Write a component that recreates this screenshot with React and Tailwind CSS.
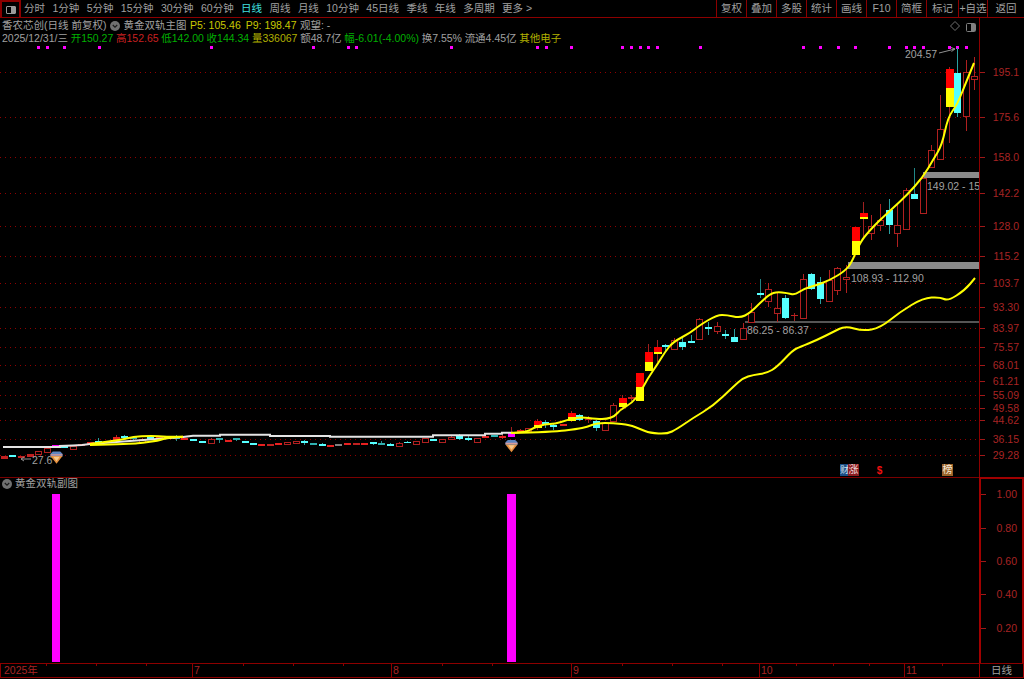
import React from "react";

const RED = "#b02020";
const leftTabs = ["分时","1分钟","5分钟","15分钟","30分钟","60分钟","日线","周线","月线","10分钟","45日线","季线","年线","多周期","更多 >"];
const rightTabs = [["复权","w-[30px]"],["叠加","w-[30px]"],["多股","w-[30px]"],["统计","w-[30px]"],["画线","w-[30px]"],["F10","w-[30px]"],["简框","w-[30px]"],["标记","w-[32px]"],["+自选","w-[29px]"],["返回","w-[37px]"]];
const prices = [["195.1",72],["175.6",117],["158.0",157],["142.2",193],["128.0",226],["115.2",256],["103.7",283],["93.30",307],["83.97",328],["75.57",347],["68.01",365],["61.21",381],["55.09",395],["49.58",408],["44.62",420],["36.15",439],["29.28",455]];
const subTicks = [["1.00",494],["0.80",528],["0.60",561],["0.40",594],["0.20",628]];
const dots = [37,46,63,98,210,312,347,355,450,536,545,570,621,630,639,647,656,699,802,819,837,854,888,905,913,922,948,956,965];
const timeTicks = [45,95,145,242,292,342,441,491,621,671,721,795,832,868,941];

// x, high, bodyTop, bodyBottom, low, kind, split
const candles = [
[4,456,456,459,459,"d"],[12,455,455,457,457,"c"],[21,456,456,458,458,"d"],[30,454,454,457,457,"d"],[38,451,451,454,454,"h"],[47,448,448,452,452,"h"],[55,445,445,447,447,"m"],[64,446,446,448,448,"c"],[73,446,446,449,449,"h"],[81,444,444,446,446,"r"],[90,442,442,444,444,"r"],[98,438,441,443,445,"c"],
[107,441,441,443,443,"c"],[116,435,437,440,440,"r"],[124,435,436,438,439,"c"],[133,437,437,439,441,"t"],[142,438,439,442,442,"h"],[150,436,437,439,439,"c"],[159,437,437,439,439,"r"],[167,436,436,438,438,"r"],[176,435,437,439,441,"t"],[184,438,438,440,440,"r"],[193,439,439,441,441,"c"],[202,441,441,443,443,"c"],[211,438,439,443,443,"h"],[219,438,438,440,443,"t"],[228,440,440,442,442,"r"],[236,438,438,440,441,"t"],[245,441,441,443,443,"c"],[253,443,443,445,445,"c"],
[261,444,444,446,446,"r"],[270,444,444,446,446,"d"],[278,443,443,445,445,"r"],[287,442,442,444,444,"h"],[296,441,441,443,443,"h"],[304,440,441,443,445,"c"],[313,443,443,445,445,"t"],[322,443,444,446,446,"c"],[330,445,445,447,447,"r"],[338,444,444,446,446,"g"],[347,443,443,445,445,"r"],[356,443,443,445,445,"d"],[364,443,443,445,445,"r"],[373,442,442,444,445,"c"],[381,441,443,445,445,"t"],[390,443,444,446,446,"c"],[399,442,443,446,446,"h"],[407,441,442,443,443,"c"],[416,441,441,444,444,"h"],[425,438,438,442,442,"h"],[433,439,439,441,441,"c"],[442,439,439,442,442,"h"],[451,436,437,439,439,"h"],[459,434,435,439,440,"c"],[468,436,438,440,441,"c"],[477,438,438,442,442,"h"],[485,436,436,438,438,"r"],[494,435,435,437,437,"t"],[502,435,436,438,439,"r"],
[511,427,433,437,437,"m"],[520,429,430,432,432,"r"],[528,428,428,431,431,"h"],[537,419,421,428,430,"y",425],[545,420,422,425,428,"c"],[553,424,425,427,430,"c"],[563,424,424,426,426,"r"],[571,411,413,421,422,"y",417],[579,414,415,420,421,"c"],[588,416,419,420,423,"d"],[596,420,421,428,431,"c"],[605,423,423,430,430,"h"],[613,403,405,421,421,"h"],[622,395,398,407,409,"y",403],[631,395,397,399,401,"d"],[639,373,373,401,401,"y",387],[648,344,352,371,371,"y",362],[657,340,347,354,362,"y",352],[665,344,345,347,351,"c"],[674,338,340,349,350,"h"],[682,338,342,347,350,"c"],[691,335,341,343,343,"c"],[699,318,319,339,340,"h"],[708,322,327,329,335,"c"],[717,322,326,331,334,"h"],[725,330,334,336,339,"c"],[734,329,337,342,342,"c"],[743,323,328,339,339,"h"],[751,303,312,322,322,"h"],[760,279,293,295,298,"c2"],[768,283,289,301,307,"h"],[777,293,308,313,322,"h"],[785,295,298,318,319,"c"],[794,313,315,316,321,"d"],[803,274,279,318,318,"h"],[811,273,274,289,290,"c"],[820,277,282,299,304,"c"],[829,270,280,301,301,"h"],[837,267,268,290,295,"h"],[846,265,277,279,293,"h"],[855,227,227,255,255,"y",241],[863,202,213,219,237,"y",217],[871,215,226,233,240,"h"],[880,204,220,225,231,"h"],[889,199,210,225,234,"c"],[897,204,225,233,247,"h"],[906,188,190,229,229,"h"],[914,168,194,199,199,"c2"],[923,176,178,213,213,"h"],[931,145,150,167,167,"h"],[940,95,129,159,159,"h"],[949,67,69,107,143,"y",88],[957,48,73,113,117,"c"],[966,60,72,116,131,"h"],[974,57,76,79,90,"h"],
];

const toPts = (a) => a.map((p) => p.join(",")).join(" ");
const smooth = (a) => {
  let d = `M${a[0][0]} ${a[0][1]}`;
  for (let i = 1; i < a.length - 1; i++) {
    const mx = (a[i][0] + a[i + 1][0]) / 2;
    const my = (a[i][1] + a[i + 1][1]) / 2;
    d += `Q${a[i][0]} ${a[i][1]} ${mx} ${my}`;
  }
  const l = a[a.length - 1];
  return d + `L${l[0]} ${l[1]}`;
};
const whiteLine = [[3,447],[60,447],[60,446],[73,445.5],[82,445],[90,444],[183,437],[193,435.7],[220,435.7],[220,434.7],[270,434.7],[270,436],[330,436],[330,436.7],[433,436.7],[433,435.3],[485,435.3],[485,433.7],[502,433.7],[502,432.7],[513,432.7]];
const yellowA = [[90,444],[100,442.7],[120,440],[133,437],[150,435.7],[167,436.7],[183,436.7]];
const yellowB = [[90,445],[133,444],[142,442.7],[158,440.7],[167,437.7],[183,436.7]];
const upper = [[511,433],[527,432],[533,428],[545,424],[555,424],[567,420],[580,417],[597,419],[607,419],[615,416],[620,410],[632,403],[640,393],[648,378],[657,365],[665,352],[673,342],[690,333],[700,325],[717,315],[727,315],[740,318],[750,313],[760,303],[770,294],[777,292],[787,293],[795,295],[803,289],[817,285],[830,280],[845,271],[852,262],[860,242],[872,228],[880,220],[893,208],[907,195],[923,177],[933,160],[942,145],[948,117],[957,105],[967,80],[974,63]];
const lower = [[511,433],[553,432],[577,429],[587,427],[597,423],[613,423],[630,425],[640,429],[650,433],[667,434],[677,429],[693,418],[713,406],[733,387],[743,378],[753,375],[767,373],[777,367],[793,350],[800,347],[817,340],[833,332],[845,326],[863,331],[880,328],[900,312],[923,298],[940,297],[948,301],[965,290],[975,278]];

function Candle({ c }) {
  const [x, hi, top, bot, lo, kind, split] = c;
  const h = Math.max(bot - top, 1);
  if (kind === "y") {
    return (
      <g shapeRendering="crispEdges">
        <line x1={x + 0.5} x2={x + 0.5} y1={hi} y2={lo} stroke="#a02020" />
        <rect x={x - 3} y={top} width={8} height={split - top} fill="#ff0000" />
        <rect x={x - 3} y={split} width={8} height={bot - split} fill="#ffff00" />
      </g>
    );
  }
  if (kind === "h") {
    return (
      <g shapeRendering="crispEdges">
        <line x1={x + 0.5} x2={x + 0.5} y1={hi} y2={top} stroke={RED} />
        <line x1={x + 0.5} x2={x + 0.5} y1={bot} y2={lo} stroke={RED} />
        <rect x={x - 2.5} y={top + 0.5} width={6} height={h} fill="#000" stroke={RED} />
      </g>
    );
  }
  const colors = { c: ["#55ffff", "#2aa0a0"], c2: ["#55ffff", "#208888"], t: ["#2fb0b0", "#2a9090"], r: ["#e82020", "#b02020"], d: ["#c02020", "#a02020"], g: ["#808080", "#808080"], m: ["#ff00ff", "#a02020"] };
  const [fill, wick] = colors[kind];
  return (
    <g shapeRendering="crispEdges">
      <line x1={x + 0.5} x2={x + 0.5} y1={hi} y2={lo} stroke={wick} />
      <rect x={x - 3} y={top} width={7} height={h} fill={fill} />
    </g>
  );
}

function Gem({ className }) {
  return (
    <svg viewBox="0 0 14 14" className={className}>
      <path d="M3 0.5h8l2.5 2.5v3H0.5V3z" fill="#5f86c0" />
      <path d="M0.5 3.5h13v1.4H0.5z" fill="#d89a9a" />
      <path d="M0.5 5.5h13L7 13.8z" fill="#e6913f" />
      <path d="M3.5 6.3h7L7 11z" fill="#f6c98c" />
    </svg>
  );
}

function CircleDown() {
  return (
    <svg viewBox="0 0 10 10" className="w-[10px] h-[10px] shrink-0">
      <circle cx="5" cy="5" r="5" fill="#707070" />
      <path d="M2.8 4l2.2 2.2L7.2 4" fill="none" stroke="#1a1a1a" strokeWidth="1.2" />
    </svg>
  );
}

function Axis({ items, start }) {
  return (
    <div className="flex flex-col" style={{ paddingTop: start }}>
      {items.map(([label, y], i) => {
        const next = items[i + 1];
        return (
          <div key={label} className="relative flex items-center h-[10px]" style={{ marginBottom: next ? next[1] - y - 10 : 0 }}>
            <div className="w-[5px] h-px bg-[#a01818]" />
            <div className="flex-1 text-right pr-[5px] text-[#a82424] text-[10.5px] leading-[10px]">{label}</div>
          </div>
        );
      })}
    </div>
  );
}

export default function App() {
  return (
    <div className="w-[1024px] h-[679px] bg-black overflow-hidden flex flex-col text-[10.5px] text-[#a0a0a0] [font-family:'Liberation_Sans','Noto_Sans_CJK_SC',sans-serif]">
      {/* toolbar */}
      <div className="h-[18px] shrink-0 flex items-center border-b border-[#8c0000]">
        <div className="w-[21px] h-full flex items-center justify-center border-2 border-b-0 border-[#8c0000]">
          <div className="w-[10px] h-[8px] border border-[#9a9a9a] rounded-[1px] flex justify-end"><div className="w-[4px] bg-[#9a9a9a]" /></div>
        </div>
        <div className="flex gap-[7.4px] pl-[3px] whitespace-nowrap">
          {leftTabs.map((t) => (
            <span key={t} className={t === "日线" ? "text-[#40e0e0]" : ""}>{t}</span>
          ))}
        </div>
        <div className="ml-auto h-full flex">
          {rightTabs.map(([t, w]) => (
            <div key={t} className={`${w} h-full flex items-center justify-center border-l border-[#8c0000] whitespace-nowrap`}>{t}</div>
          ))}
        </div>
      </div>

      {/* main panel */}
      <div className="h-[460px] shrink-0 flex">
        <div className="relative w-[979px] h-[459px] overflow-hidden">
          <svg viewBox="0 18 979 459" className="absolute inset-0 w-[979px] h-[459px]">
            {prices.map(([l, y]) => (
              <line key={l} x1="0" x2="979" y1={y + 0.5} y2={y + 0.5} stroke="#900000" strokeDasharray="1 4" />
            ))}
            {dots.map((x) => <rect key={x} x={x} y="46" width="3" height="3" fill="#ff00ff" />)}
            <rect x="923" y="172" width="56" height="6" fill="#8a8a8a" />
            <rect x="848" y="262" width="131" height="7" fill="#8a8a8a" />
            <rect x="745" y="321" width="234" height="2" fill="#555555" />
            {candles.map((c) => <Candle key={c[0]} c={c} />)}
            <polyline points={toPts(whiteLine)} fill="none" stroke="#e4e4e4" strokeWidth="2" />
            <path d={smooth(yellowA)} fill="none" stroke="#ffff00" strokeWidth="2" />
            <path d={smooth(yellowB)} fill="none" stroke="#ffff00" strokeWidth="2" />
            <path d={smooth(lower)} fill="none" stroke="#ffff00" strokeWidth="2" />
            <path d={smooth(upper)} fill="none" stroke="#ffff00" strokeWidth="2" />
            <path d="M939 53L955 49M951 47.5L955 49L951.5 51.5" fill="none" stroke="#909090" />
            <path d="M31 459H21M24 457L21 459L24 461" fill="none" stroke="#909090" />
            <path d="M955 21.5l4.5 4.5-4.5 4.5-4.5-4.5z" fill="none" stroke="#707070" />
            <rect x="966.5" y="23.5" width="9" height="8" rx="1" fill="none" stroke="#808080" />
            <rect x="971" y="24" width="4" height="7" fill="#808080" />
          </svg>

          <div className="relative flex flex-col pl-[2px] pt-px leading-[13px] whitespace-nowrap">
            <div className="flex items-center h-[13px]">
              <span>香农芯创(日线 前复权)</span>
              <span className="ml-[4px] mr-[3px]"><CircleDown /></span>
              <span>黄金双轨主图</span>
              <span className="ml-[3.5px] text-[#c8c800]">P5: 105.46</span>
              <span className="ml-[5px] text-[#c8c800]">P9: 198.47</span>
              <span className="ml-[3.5px]">观望: -</span>
            </div>
            <div className="flex items-center h-[13px] gap-[2.7px]">
              <span>2025/12/31/三</span>
              <span className="text-[#00b000]">开150.27</span>
              <span className="text-[#c82020]">高152.65</span>
              <span className="text-[#00b000]">低142.00</span>
              <span className="text-[#00b000]">收144.34</span>
              <span className="text-[#b0b000]">量336067</span>
              <span>额48.7亿</span>
              <span className="text-[#00b000]">幅-6.01(-4.00%)</span>
              <span>换7.55%</span>
              <span>流通4.45亿</span>
              <span className="text-[#b0b000]">其他电子</span>
            </div>
          </div>

          <span className="absolute left-[905px] top-[30px] leading-[12px] whitespace-nowrap">204.57</span>
          <span className="absolute left-[927px] top-[162px] leading-[12px] whitespace-nowrap">149.02 - 15</span>
          <span className="absolute left-[851px] top-[254px] leading-[12px] whitespace-nowrap">108.93 - 112.90</span>
          <span className="absolute left-[747px] top-[306px] leading-[12px] whitespace-nowrap">86.25 - 86.37</span>
          <span className="absolute left-[32px] top-[436px] leading-[12px]">27.6</span>
          <Gem className="absolute left-[50px] top-[433px] w-[13px] h-[13px]" />
          <Gem className="absolute left-[505px] top-[421px] w-[13px] h-[14px]" />

          <div className="absolute left-[840px] top-[446px] w-[8px] h-[12px] bg-[#1c4f86] text-[#d8e4f0] text-[9px] leading-[12px] text-center overflow-hidden">财</div>
          <div className="absolute left-[848px] top-[446px] w-[11px] h-[12px] bg-[#8a1c20] text-[#f0d8d8] text-[10px] leading-[12px] text-center overflow-hidden">涨</div>
          <div className="absolute left-[876px] top-[447px] w-[7px] h-[11px] text-[#f01010] text-[10px] font-bold leading-[11px] text-center">$</div>
          <div className="absolute left-[942px] top-[446px] w-[11px] h-[12px] bg-[#9a6228] text-[#f4e8d8] text-[10px] leading-[12px] text-center overflow-hidden">榜</div>
        </div>
        <div className="w-[45px] h-[459px] border-l border-[#8c0000]">
          <Axis items={prices} start={49} />
        </div>
      </div>

      {/* sub panel */}
      <div className="h-[186px] shrink-0 flex -mt-px">
        <div className="relative w-[979px] h-[186px] border-t border-[#7a0000]">
          <svg viewBox="0 478 979 185" className="absolute inset-0 w-[979px] h-[185px]">
            <rect x="52" y="494" width="8" height="168" fill="#ff00ff" />
            <rect x="507" y="494" width="9" height="168" fill="#ff00ff" />
          </svg>
          <div className="relative flex items-center gap-[3px] pl-[2px] h-[12px] whitespace-nowrap">
            <CircleDown />
            <span>黄金双轨副图</span>
          </div>
        </div>
        <div className="w-[45px] h-[186px] border-2 border-b-0 border-[#a00000]">
          <Axis items={subTicks} start={10} />
        </div>
      </div>

      {/* time bar */}
      <div className="h-[15px] shrink-0 flex border-y border-l border-[#8c0000] text-[#a82424] leading-[13px] relative">
        <div className="w-[191px] pl-[3px]">2025年</div>
        <div className="w-[199px] border-l border-[#8c0000] pl-px">7</div>
        <div className="w-[180px] border-l border-[#8c0000] pl-px">8</div>
        <div className="w-[188px] border-l border-[#8c0000] pl-px">9</div>
        <div className="w-[145px] border-l border-[#8c0000] pl-px">10</div>
        <div className="w-[75px] border-l border-[#8c0000] pl-px">11</div>
        <div className="flex-1 border-x border-[#a00000] text-center text-[#a0a0a0]">日线</div>
        {timeTicks.map((x) => (
          <div key={x} className="absolute top-0 w-px h-[2px] bg-[#8c0000]" style={{ left: x }} />
        ))}
      </div>
    </div>
  );
}
